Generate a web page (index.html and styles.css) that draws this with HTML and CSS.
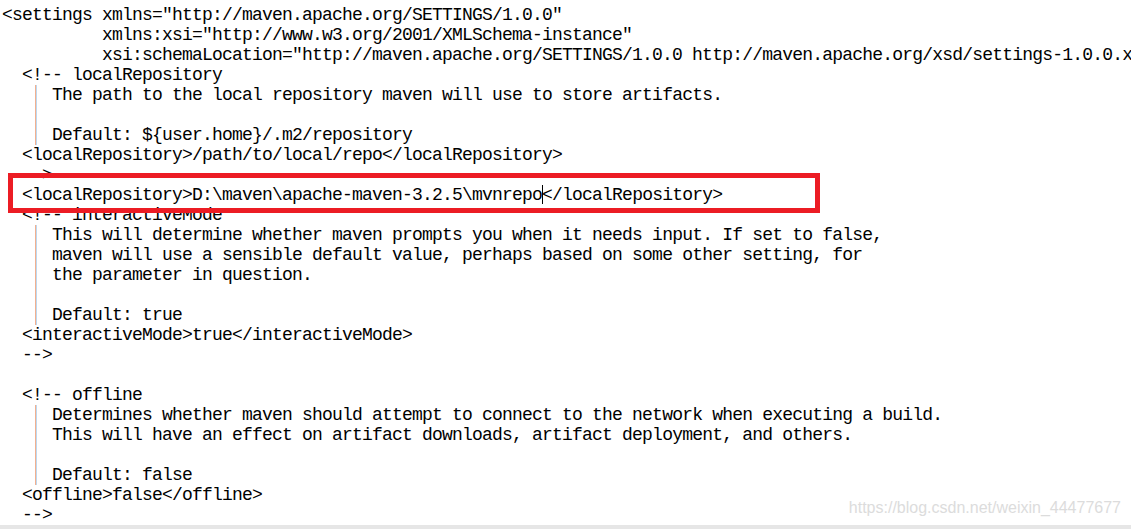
FILE: index.html
```
<!DOCTYPE html>
<html lang="en">
<head>
    <meta charset="UTF-8">
    <title>settings.xml</title>
    <link rel="stylesheet" href="styles.css">
</head>
<body>
<div class="editor">
<div class="ln">&lt;settings xmlns="http://maven.apache.org/SETTINGS/1.0.0"</div>
<div class="ln">          xmlns:xsi="http://www.w3.org/2001/XMLSchema-instance"</div>
<div class="ln">          xsi:schemaLocation="http://maven.apache.org/SETTINGS/1.0.0 http://maven.apache.org/xsd/settings-1.0.0.xsd"&gt;</div>
<div class="ln">  &lt;!-- localRepository</div>
<div class="ln">   <span class="bar">|</span> The path to the local repository maven will use to store artifacts.</div>
<div class="ln">   <span class="bar">|</span></div>
<div class="ln">   <span class="bar">|</span> Default: ${user.home}/.m2/repository</div>
<div class="ln">  &lt;localRepository&gt;/path/to/local/repo&lt;/localRepository&gt;</div>
<div class="ln">  --&gt;</div>
<div class="ln">  &lt;localRepository&gt;D:\maven\apache-maven-3.2.5\mvnrepo<span class="caret"></span>&lt;/localRepository&gt;</div>
<div class="ln">  &lt;!-- interactiveMode</div>
<div class="ln">   <span class="bar">|</span> This will determine whether maven prompts you when it needs input. If set to false,</div>
<div class="ln">   <span class="bar">|</span> maven will use a sensible default value, perhaps based on some other setting, for</div>
<div class="ln">   <span class="bar">|</span> the parameter in question.</div>
<div class="ln">   <span class="bar">|</span></div>
<div class="ln">   <span class="bar">|</span> Default: true</div>
<div class="ln">  &lt;interactiveMode&gt;true&lt;/interactiveMode&gt;</div>
<div class="ln">  --&gt;</div>
<div class="ln"> </div>
<div class="ln">  &lt;!-- offline</div>
<div class="ln">   <span class="bar">|</span> Determines whether maven should attempt to connect to the network when executing a build.</div>
<div class="ln">   <span class="bar">|</span> This will have an effect on artifact downloads, artifact deployment, and others.</div>
<div class="ln">   <span class="bar">|</span></div>
<div class="ln">   <span class="bar">|</span> Default: false</div>
<div class="ln">  &lt;offline&gt;false&lt;/offline&gt;</div>
<div class="ln">  --&gt;</div>

<div class="mark"></div>
<div class="watermark">https://blog.csdn.net/weixin_44477677</div>
</div>
<div class="scrollbar"></div>
</body>
</html>
```
FILE: styles.css
```
html, body { margin: 0; background: #fff; }
body { width: 1131px; height: 529px; overflow: hidden; }

.editor {
    position: relative;
    padding: 5px 0 0 2px;
    height: 520px;
    overflow: hidden;
    font-family: 'Liberation Mono', 'DejaVu Sans Mono', monospace;
    font-size: 18px;
    letter-spacing: -0.8px;
    line-height: 20px;
    color: #000;
}
.ln { white-space: pre; height: 20px; }

.bar {
    display: inline-block;
    width: 10px;
    height: 20px;
    vertical-align: top;
    color: transparent;
    background: linear-gradient(to right,
        transparent 3px, #f2b08f 3px, #f2b08f 4px,
        #bcd8f0 4px, #bcd8f0 5px, transparent 5px);
}

.caret {
    display: inline-block;
    width: 0;
    height: 19px;
    vertical-align: top;
    border-left: 1px solid #000;
    margin-right: -1px;
}

/* red annotation box drawn over the text */
.mark {
    position: absolute;
    left: 8px;
    top: 173px;
    width: 802px;
    height: 30px;
    border: 5px solid #ec1c24;
}

.watermark {
    position: absolute;
    right: 10px;
    top: 498px;
    font-family: 'Liberation Sans', Arial, sans-serif;
    font-size: 16px;
    letter-spacing: 0;
    color: #dcdcdc;
}

.scrollbar { height: 4px; background: #e6e6e6; }
```
